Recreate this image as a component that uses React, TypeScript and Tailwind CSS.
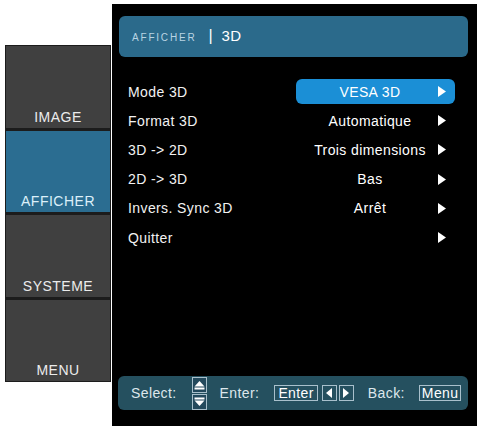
const font = { fontFamily: '"Liberation Sans", Arial, sans-serif' };

const tabs = [
  { label: "IMAGE", active: false },
  { label: "AFFICHER", active: true },
  { label: "SYSTEME", active: false },
  { label: "MENU", active: false },
];

const rows = [
  { label: "Mode 3D", value: "VESA 3D", selected: true },
  { label: "Format 3D", value: "Automatique" },
  { label: "3D -> 2D", value: "Trois dimensions" },
  { label: "2D -> 3D", value: "Bas" },
  { label: "Invers. Sync 3D", value: "Arrêt" },
  { label: "Quitter", value: "" },
];

function Arrow() {
  return (
    <svg width="8" height="11" viewBox="0 0 8 11" className="shrink-0">
      <polygon points="0,0 8,5.5 0,11" fill="#ffffff" />
    </svg>
  );
}

function UpDown() {
  return (
    <svg width="15" height="33" viewBox="0 0 15 33" className="shrink-0">
      <rect x="0.5" y="0.5" width="14" height="15" fill="#23495c" stroke="#a9c0cc" />
      <polygon points="2.5,9.5 7.5,4 12.5,9.5" fill="#ffffff" />
      <rect x="2.5" y="10.5" width="10" height="2" fill="#ffffff" />
      <rect x="0.5" y="17.5" width="14" height="15" fill="#23495c" stroke="#a9c0cc" />
      <rect x="2.5" y="20.5" width="10" height="2" fill="#ffffff" />
      <polygon points="2.5,23.5 12.5,23.5 7.5,29" fill="#ffffff" />
    </svg>
  );
}

function KeyArrow({ dir }: { dir: "left" | "right" }) {
  return (
    <div className="w-[15px] h-[16px] border border-[#a9c0cc] flex items-center justify-center">
      <svg width="6" height="10" viewBox="0 0 6 10">
        {dir === "left" ? (
          <polygon points="6,0 0,5 6,10" fill="#ffffff" />
        ) : (
          <polygon points="0,0 6,5 0,10" fill="#ffffff" />
        )}
      </svg>
    </div>
  );
}

export default function App() {
  return (
    <div className="w-[479px] h-[431px] bg-white flex items-start overflow-hidden" style={font}>
      <div className="mt-[45px] ml-[5px] w-[106px] bg-[#1c1c1c] p-[1px] flex flex-col gap-[3px]">
        {tabs.map((t) => (
          <div
            key={t.label}
            className={
              "h-[81.5px] flex items-end justify-center pb-[3px] text-[14px] leading-[16px] tracking-[0.5px] " +
              (t.active ? "bg-[#2b6d91] text-[#dcf0fa]" : "bg-[#404040] text-[#ececec]")
            }
          >
            {t.label}
          </div>
        ))}
      </div>

      <div className="mt-[4px] ml-[1px] w-[365px] h-[422px] bg-black flex flex-col">
        <div className="mt-[12px] ml-[7px] w-[349px] h-[41px] rounded-[6px] bg-[#2b6a8b] flex items-baseline pl-[13px] pt-[8px]">
          <span className="text-[10px] tracking-[1.8px] text-[#b9d4e3]">AFFICHER</span>
          <span className="ml-[12px] text-[16px] text-white">|</span>
          <span className="ml-[9px] text-[15px] tracking-[0.3px] text-white">3D</span>
        </div>

        <div className="mt-[20px] flex flex-col">
          {rows.map((r) => (
            <div key={r.label} className="h-[29.2px] flex items-center pl-[16px]">
              <span className="w-[168px] text-[14px] leading-[16px] tracking-[0.4px] text-[#f2f2f2]">
                {r.label}
              </span>
              <div
                className={
                  "w-[159px] h-[25px] rounded-[6px] flex items-center " +
                  (r.selected ? "bg-[#1b8fd6]" : "")
                }
              >
                <span className="ml-[6px] w-[136px] text-center text-[14px] leading-[16px] tracking-[0.4px] text-white">
                  {r.value}
                </span>
                <Arrow />
              </div>
            </div>
          ))}
        </div>

        <div className="flex-1" />

        <div className="mb-[16px] ml-[6px] w-[350px] h-[34px] rounded-[6px] bg-[#25505f] flex items-center pl-[13px] text-[14px] leading-[16px] tracking-[0.4px] text-[#dde7ec]">
          <span>Select:</span>
          <div className="ml-[15px]">
            <UpDown />
          </div>
          <span className="ml-[13px]">Enter:</span>
          <div className="ml-[15px] h-[16px] px-[3px] border border-[#a9c0cc] flex items-center text-white">
            Enter
          </div>
          <div className="ml-[4px]">
            <KeyArrow dir="left" />
          </div>
          <div className="ml-[2px]">
            <KeyArrow dir="right" />
          </div>
          <span className="ml-[14px]">Back:</span>
          <div className="ml-[14px] h-[16px] px-[2px] border border-[#a9c0cc] flex items-center text-white">
            Menu
          </div>
        </div>
      </div>
    </div>
  );
}
